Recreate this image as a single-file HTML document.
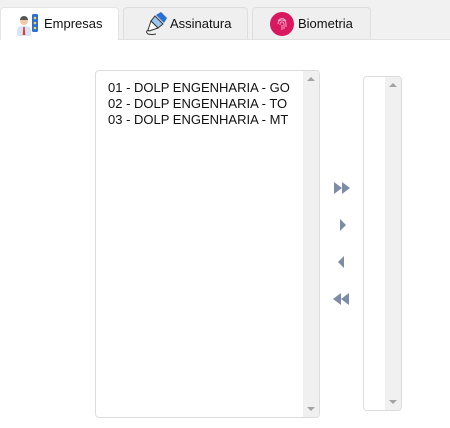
<!DOCTYPE html>
<html><head><style>
body{margin:0;width:450px;height:428px;background:#fff;font-family:"Liberation Sans",Arial,sans-serif;position:relative;overflow:hidden}
.bar{position:absolute;left:0;top:0;width:450px;height:39px;background:#f1f1f1;border-bottom:1px solid #e2e2e2}
.tab{position:absolute;top:7px;height:32px;border:1px solid #dedede;border-bottom:none;border-radius:4px 4px 0 0;background:#efefef;font-size:13px;color:#111;box-sizing:border-box}
.tab span{position:absolute;top:8px}
.tab.a{background:#fff;height:33px;border-color:#e4e4e4}
.list{position:absolute;border:1px solid #dcdcdc;border-radius:4px;background:#fff;box-sizing:border-box;overflow:hidden}
.sb{position:absolute;top:0;right:0;width:16px;bottom:0;background:#f0f0f0}
.up,.dn{position:absolute;left:4px;width:0;height:0;border-left:4px solid transparent;border-right:4px solid transparent}
.up{top:6px;border-bottom:4px solid #a3a3a3}
.dn{bottom:6px;border-top:4px solid #a3a3a3}
.items{position:absolute;left:12px;top:9px;font-size:13px;line-height:16px;color:#111}
svg{position:absolute}
</style></head><body>
<div class="bar"></div>
<div class="tab a" style="left:0;width:119px">
<svg style="left:15px;top:5px" width="24" height="24" viewBox="0 0 24 24"><circle cx="8" cy="8" r="4" fill="#f2c9a8"/><path d="M4 7a4 4 0 0 1 8 0z" fill="#555"/><path d="M1 23v-6q0-4 7-4q7 0 7 4v6z" fill="#d9e4f2"/><path d="M7.3 14h1.4l.6 8h-2.6z" fill="#e03a3a"/><rect x="16" y="1" width="6" height="18" rx="1.5" fill="#2a6fd6"/><circle cx="19" cy="5" r="1.3" fill="#ffd23c"/><circle cx="19" cy="10" r="1.3" fill="#ffd23c"/><circle cx="19" cy="15" r="1.3" fill="#ffd23c"/></svg>
<span style="left:43px">Empresas</span></div>
<div class="tab" style="left:123px;width:125px">
<svg style="left:19px;top:3px" width="26" height="26" viewBox="0 0 26 26"><path d="M13 4l5-3 6 6-3 5z" fill="#2a6fd6"/><path d="M12 5l8 8-5 4-7-7z" fill="#9cc7ee" stroke="#333" stroke-width="1"/><path d="M8 10l7 7-9 3 -1-1z" fill="#fff" stroke="#333" stroke-width="1"/><path d="M5 19q-3 2 0 4q4 1 8 0" fill="none" stroke="#333" stroke-width="1"/></svg>
<span style="left:46px">Assinatura</span></div>
<div class="tab" style="left:252px;width:119px">
<svg style="left:17px;top:4px" width="24" height="24" viewBox="0 0 24 24"><circle cx="12" cy="12" r="12" fill="#d8185f"/><path d="M8 9q4-5 8 0M8 12q0-4 4-4 4 0 4 4v3M10 13q0-3 2-3t2 3v4M12 13v5" fill="none" stroke="#f7a9c4" stroke-width="1"/></svg>
<span style="left:45px">Biometria</span></div>

<div class="list" style="left:95px;top:70px;width:225px;height:348px">
<div class="items">01 - DOLP ENGENHARIA - GO<br>02 - DOLP ENGENHARIA - TO<br>03 - DOLP ENGENHARIA - MT</div>
<div class="sb"><div class="up"></div><div class="dn"></div></div></div>

<div class="list" style="left:363px;top:76px;width:39px;height:335px">
<div class="sb"><div class="up"></div><div class="dn"></div></div></div>

<svg style="left:334px;top:182px" width="17" height="12"><path d="M0 0l8 6-8 6zM8 0l8 6-8 6z" fill="#7d8ca6"/></svg>
<svg style="left:340px;top:219px" width="8" height="12"><path d="M0 0l6 6-6 6z" fill="#7d8ca6"/></svg>
<svg style="left:337px;top:256px" width="8" height="12"><path d="M7 0l-6 6 6 6z" fill="#7d8ca6"/></svg>
<svg style="left:333px;top:293px" width="17" height="12"><path d="M8 0l-8 6 8 6zM16 0l-8 6 8 6z" fill="#7d8ca6"/></svg>
</body></html>
